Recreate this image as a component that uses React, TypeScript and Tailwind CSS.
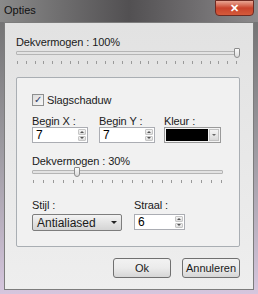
import React from "react";

const FONT = "font-['Liberation_Sans',Arial,sans-serif]";
const TXT = "text-[11px] leading-[12px] tracking-[-0.1px]";

function Ticks({ count }: { count: number }) {
  return (
    <div className="flex justify-between px-[1px]">
      {Array.from({ length: count }).map((_, i) => (
        <span key={i} className="w-px h-[3px] bg-[#9a9a9a]" />
      ))}
    </div>
  );
}

function Slider({ width, pos, ticks }: { width: number; pos: number; ticks: number }) {
  return (
    <div style={{ width }} className="flex flex-col gap-[3px]">
      <div className="relative h-[10px]">
        <div className="absolute left-0 right-0 top-[3px] h-[4px] rounded-[1px] border border-[#b5b5b5] bg-[#e3e3e3]" />
        <div
          style={{ left: pos }}
          className="absolute top-0 w-[6px] h-[10px] rounded-b-[3px] rounded-t-[1px] border border-[#8d8d8d] bg-gradient-to-b from-[#fbfbfb] to-[#dcdcdc]"
        />
      </div>
      <Ticks count={ticks} />
    </div>
  );
}

function Spin() {
  return (
    <div className="flex flex-col w-[9px] h-full gap-px py-px pr-px">
      <div className="flex-1 flex items-center justify-center bg-gradient-to-b from-[#f4f4f4] to-[#dedede] border border-[#c6c6c6] rounded-[1px]">
        <span className="w-0 h-0 border-x-[2px] border-x-transparent border-b-[2px] border-b-[#555]" />
      </div>
      <div className="flex-1 flex items-center justify-center bg-gradient-to-b from-[#f4f4f4] to-[#dedede] border border-[#c6c6c6] rounded-[1px]">
        <span className="w-0 h-0 border-x-[2px] border-x-transparent border-t-[2px] border-t-[#555]" />
      </div>
    </div>
  );
}

function SpinInput({ value, width }: { value: string; width: number }) {
  return (
    <div style={{ width }} className="h-[16px] flex items-stretch border border-[#abadb3] bg-white">
      <span className="flex-1 pl-[3px] text-[12px] leading-[14px] text-black">{value}</span>
      <Spin />
    </div>
  );
}

export default function App() {
  return (
    <div
      className={`${FONT} w-[258px] h-[294px] flex flex-col overflow-hidden bg-gradient-to-b from-[#6e6e6e] via-[#9c9aa0] to-[#d6c6de] text-[#1a1a1a]`}
    >
      {/* title bar */}
      <div className="h-[22px] flex items-start justify-between pl-[4px] pr-[4px] bg-gradient-to-r from-[#8a8a8a] via-[#525052] to-[#8c8a8c]">
        <span className="mt-[3px] text-[11px] leading-[14px] text-[#111]">Opties</span>
        <div className="w-[39px] h-[16px] flex items-center justify-center rounded-b-[4px] border border-[#6e2a22] bg-gradient-to-b from-[#e8a593] via-[#c9432c] to-[#d45a3b]">
          <span className="text-white text-[11px] leading-none font-bold">✕</span>
        </div>
      </div>

      {/* client area */}
      <div className="flex-1 mx-[4px] mb-[4px] border border-[#7c7c7c] bg-gradient-to-b from-[#e2e2e2] to-[#eeeeee] flex flex-col pl-[11px] pt-[13px]">
        <span className={TXT}>Dekvermogen : 100%</span>
        <Slider width={222} pos={218} ticks={26} />

        {/* group box */}
        <div className="mt-[13px] w-[224px] h-[170px] border border-[#a9aeb3] rounded-[2px] bg-[#f1f1f1] pl-[15px] pt-[15px] flex flex-col">
          <div className="flex items-center gap-[3px] h-[14px]">
            <span className="w-[12px] h-[12px] border border-[#8e8f8f] bg-gradient-to-br from-[#dcdcdc] to-[#f8f8f8] flex items-center justify-center text-[10px] leading-none text-[#2a3a6a]">
              ✓
            </span>
            <span className={TXT}>Slagschaduw</span>
          </div>

          <div className="mt-[8px] flex">
            <div className="w-[56px] flex flex-col">
              <span className={TXT}>Begin X :</span>
              <SpinInput value="7" width={56} />
            </div>
            <div className="ml-[11px] w-[56px] flex flex-col">
              <span className={TXT}>Begin Y :</span>
              <SpinInput value="7" width={56} />
            </div>
            <div className="ml-[9px] w-[57px] flex flex-col">
              <span className={TXT}>Kleur :</span>
              <div className="h-[16px] flex items-stretch border border-[#9a9a9a] bg-[#f4f4f4] p-px gap-px">
                <span className="flex-1 bg-black" />
                <span className="w-[10px] flex items-center justify-center bg-gradient-to-b from-[#f4f4f4] to-[#d9d9d9] border border-[#c2c2c2]">
                  <span className="w-0 h-0 border-x-[2px] border-x-transparent border-t-[2px] border-t-[#666]" />
                </span>
              </div>
            </div>
          </div>

          <span className={`mt-[12px] ${TXT}`}>Dekvermogen : 30%</span>
          <Slider width={191} pos={42} ticks={20} />

          <div className="mt-[16px] flex">
            <div className="w-[90px] flex flex-col gap-[3px]">
              <span className={TXT}>Stijl :</span>
              <div className="h-[17px] flex items-center justify-between px-[4px] border border-[#7d7d7d] rounded-[2px] bg-gradient-to-b from-[#f3f3f3] to-[#d4d4d4]">
                <span className="text-[12px] leading-[14px]">Antialiased</span>
                <span className="w-0 h-0 border-x-[3px] border-x-transparent border-t-[3px] border-t-[#222]" />
              </div>
            </div>
            <div className="ml-[12px] w-[51px] flex flex-col gap-[3px]">
              <span className={TXT}>Straal :</span>
              <SpinInput value="6" width={51} />
            </div>
          </div>
        </div>

        {/* buttons */}
        <div className="mt-[11px] w-[224px] flex justify-end gap-[11px]">
          <div className="w-[58px] h-[20px] flex items-center justify-center rounded-[3px] border border-[#707070] bg-gradient-to-b from-[#f2f2f2] via-[#ebebeb] to-[#d6d6d6] text-[11px] leading-none">
            Ok
          </div>
          <div className="w-[58px] h-[20px] flex items-center justify-center rounded-[3px] border border-[#707070] bg-gradient-to-b from-[#f2f2f2] via-[#ebebeb] to-[#d6d6d6] text-[11px] leading-none">
            Annuleren
          </div>
        </div>
      </div>
    </div>
  );
}
